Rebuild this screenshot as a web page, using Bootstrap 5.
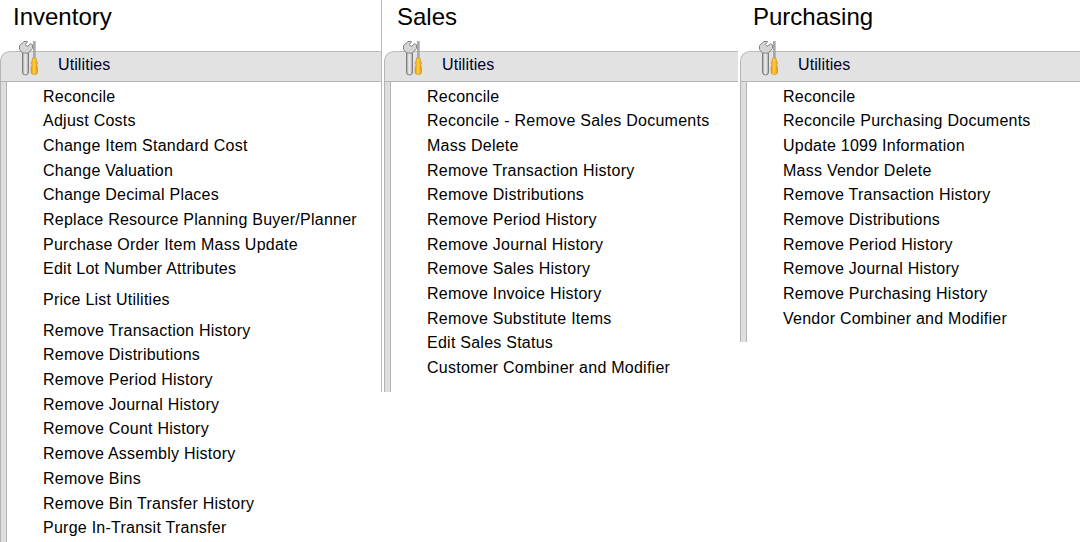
<!DOCTYPE html>
<html lang="en">
<head>
  <meta charset="UTF-8" />
  <title>Utilities</title>
  <link href="https://cdn.jsdelivr.net/npm/bootstrap@5.3.0/dist/css/bootstrap.min.css" rel="stylesheet" />
  <style>
    html, body { margin: 0; padding: 0; background: #fff; overflow: hidden; }
    body { width: 1080px; height: 542px; font-family: "Liberation Sans", Arial, sans-serif; color: #000; }
    .module-col { flex: none; }
    .col-inv { width: 384px; }
    .col-sal { width: 356px; }
    .col-pur { width: 340px; }
    .module-title { font-size: 24px; line-height: 28px; height: 51px; padding: 3px 0 0 13px; margin: 0; font-weight: 400; }
    .col-inv .util-panel { margin-right: 3px; }
    .col-sal .util-panel { margin-right: 2px; }
    .util-panel { position: relative; background: #dedede; border-top: 1px solid #bcbcbc; border-left: 1px solid #b4b4b4; border-top-left-radius: 10px; }
    .util-head { height: 30px; background: #e2e2e2; border-top-left-radius: 10px; border-bottom: 1px solid #b4b4b4; font-size: 16px; line-height: 25px; letter-spacing: .1px; color: #00002a; padding-left: 57px; }
    .util-icon { position: absolute; left: 17px; top: -12px; width: 21px; height: 36px; }
    .util-body { margin-left: 5px; background: #fff; border-left: 1px solid #b4b4b4; }
    .util-list { margin: 0; padding: 1.6px 0 12px 36px; list-style: none; font-size: 16px; letter-spacing: .25px; }
    .util-list li { height: 24.7px; line-height: 25px; white-space: nowrap; }
    .util-list li.gap-item { height: 36.6px; line-height: 37px; }
    .module-edge { position: absolute; left: 381px; top: 0; width: 1px; height: 392px; background: #b8b8b8; }
  </style>
</head>
<body>
  <svg width="0" height="0" class="position-absolute">
    <defs>
      <linearGradient id="wrenchFill" x1="0" x2="1" y1="0" y2="0">
        <stop offset="0" stop-color="#9a9a9a"/>
        <stop offset=".45" stop-color="#f2f2f2"/>
        <stop offset="1" stop-color="#a8a8a8"/>
      </linearGradient>
      <linearGradient id="gripFill" x1="0" x2="1" y1="0" y2="0">
        <stop offset="0" stop-color="#e89a10"/>
        <stop offset=".5" stop-color="#ffd23c"/>
        <stop offset="1" stop-color="#e09010"/>
      </linearGradient>
      <symbol id="toolsIcon" viewBox="0 0 21 36">
        <rect x="4.500" y="11" width="6" height="24" rx="3" fill="url(#wrenchFill)" stroke="#7c7c7c"/>
        <path d="M4.500 13 1.500 9.500V5.500L6 1.500h3.500L7.500 4.500l1.500 2 4-3 1.500 1.500v3.500L10.500 13z" fill="#d4d4d4" stroke="#858585"/>
        <rect x="15" y="1" width="2.500" height="17" fill="#8c8c8c"/>
        <rect x="15.500" y="1" width="1" height="17" fill="#c4c4c4"/>
        <path d="M14.500 18h3.500l.5 3 1 2-1 2 1 2v6l-1.500 1.500h-3L13 33v-6l1-2-1-2 1-2z" fill="url(#gripFill)" stroke="#c48a12" stroke-width=".5"/>
      </symbol>
    </defs>
  </svg>
  <div class="d-flex position-relative">
    <div class="module-edge"></div>
    <div class="module-col col-inv">
      <h2 class="module-title">Inventory</h2>
      <div class="util-panel">
        <svg class="util-icon"><use href="#toolsIcon"/></svg>
        <div class="util-head">Utilities</div>
        <div class="util-body">
          <ul class="util-list">
            <li>Reconcile</li>
            <li>Adjust Costs</li>
            <li>Change Item Standard Cost</li>
            <li>Change Valuation</li>
            <li>Change Decimal Places</li>
            <li>Replace Resource Planning Buyer/Planner</li>
            <li>Purchase Order Item Mass Update</li>
            <li>Edit Lot Number Attributes</li>
            <li class="gap-item">Price List Utilities</li>
            <li>Remove Transaction History</li>
            <li>Remove Distributions</li>
            <li>Remove Period History</li>
            <li>Remove Journal History</li>
            <li>Remove Count History</li>
            <li>Remove Assembly History</li>
            <li>Remove Bins</li>
            <li>Remove Bin Transfer History</li>
            <li>Purge In-Transit Transfer</li>
          </ul>
        </div>
      </div>
    </div>
    <div class="module-col col-sal">
      <h2 class="module-title">Sales</h2>
      <div class="util-panel">
        <svg class="util-icon"><use href="#toolsIcon"/></svg>
        <div class="util-head">Utilities</div>
        <div class="util-body">
          <ul class="util-list">
            <li>Reconcile</li>
            <li>Reconcile - Remove Sales Documents</li>
            <li>Mass Delete</li>
            <li>Remove Transaction History</li>
            <li>Remove Distributions</li>
            <li>Remove Period History</li>
            <li>Remove Journal History</li>
            <li>Remove Sales History</li>
            <li>Remove Invoice History</li>
            <li>Remove Substitute Items</li>
            <li>Edit Sales Status</li>
            <li>Customer Combiner and Modifier</li>
          </ul>
        </div>
      </div>
    </div>
    <div class="module-col col-pur">
      <h2 class="module-title">Purchasing</h2>
      <div class="util-panel">
        <svg class="util-icon"><use href="#toolsIcon"/></svg>
        <div class="util-head">Utilities</div>
        <div class="util-body">
          <ul class="util-list">
            <li>Reconcile</li>
            <li>Reconcile Purchasing Documents</li>
            <li>Update 1099 Information</li>
            <li>Mass Vendor Delete</li>
            <li>Remove Transaction History</li>
            <li>Remove Distributions</li>
            <li>Remove Period History</li>
            <li>Remove Journal History</li>
            <li>Remove Purchasing History</li>
            <li>Vendor Combiner and Modifier</li>
          </ul>
        </div>
      </div>
    </div>
  </div>
  <script src="https://cdn.jsdelivr.net/npm/bootstrap@5.3.0/dist/js/bootstrap.bundle.min.js"></script>
</body>
</html>
